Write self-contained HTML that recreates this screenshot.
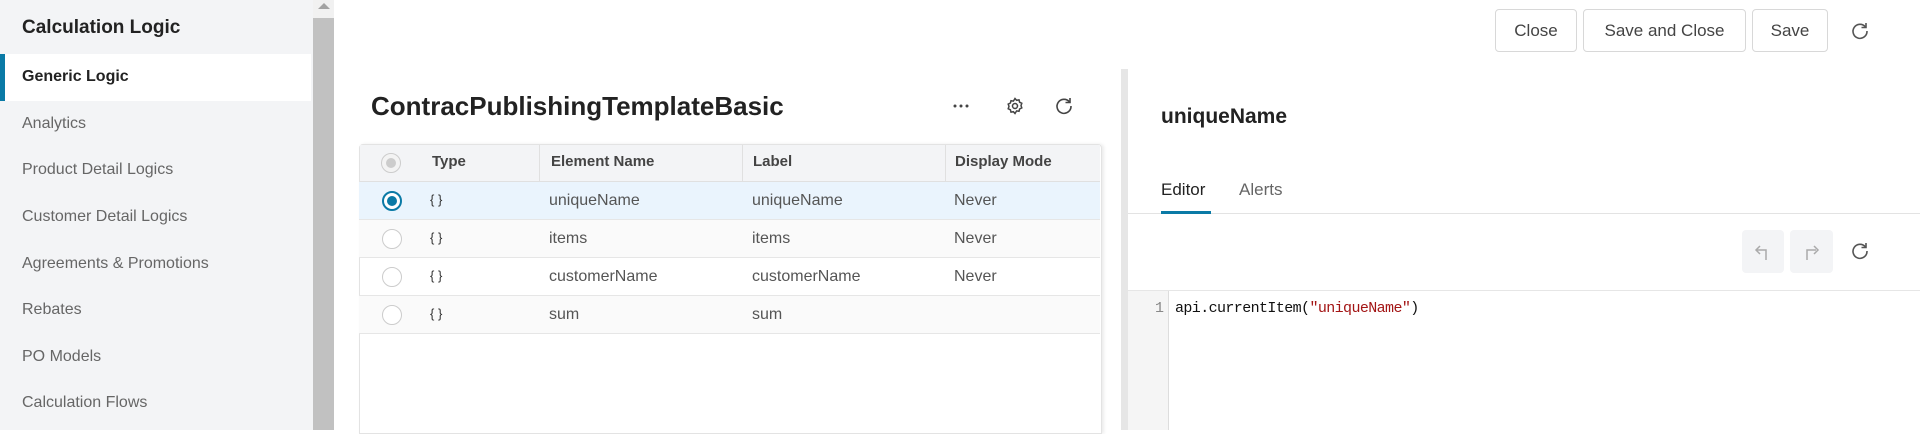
<!DOCTYPE html>
<html><head><style>
*{box-sizing:border-box;margin:0;padding:0}
body{width:1920px;height:430px;overflow:hidden;background:#fff;font-family:"Liberation Sans",sans-serif;position:relative;color:#222}
.a{position:absolute}
.side{left:0;top:0;width:313px;height:430px;background:#f3f4f6}
.side .t{left:22px;top:17px;font-size:19px;font-weight:bold;color:#222}
.side .it{left:22px;font-size:16px;color:#666;white-space:nowrap}
.sb{left:313px;top:0;width:21px;height:430px;background:#f1f1f1}
.btn{border:1px solid #d8d8d8;border-radius:4px;height:43px;top:9px;font-size:17px;color:#444;display:flex;align-items:center;justify-content:center;background:#fff}
.th{font-size:15px;font-weight:bold;color:#444;top:153px}
.row{left:359px;width:741px;height:38px;border-bottom:1px solid #e6e6e6}
.cell{font-size:16px;color:#555;white-space:nowrap}
.rad{width:20px;height:20px;border:1px solid #ccc;border-radius:50%;background:#fff}
</style></head><body>
<div class="a side">
 <div class="a t">Calculation Logic</div>
 <div class="a" style="left:0;top:54px;width:311px;height:47px;background:#fff"></div>
 <div class="a" style="left:0;top:54px;width:5px;height:47px;background:#0a7aa6"></div>
 <div class="a it" style="top:68px;color:#222;font-weight:bold">Generic Logic</div>
 <div class="a it" style="top:115px">Analytics</div>
 <div class="a it" style="top:161px">Product Detail Logics</div>
 <div class="a it" style="top:208px">Customer Detail Logics</div>
 <div class="a it" style="top:255px">Agreements &amp; Promotions</div>
 <div class="a it" style="top:301px">Rebates</div>
 <div class="a it" style="top:348px">PO Models</div>
 <div class="a it" style="top:394px">Calculation Flows</div>
</div>
<div class="a sb"><div class="a" style="left:5px;top:3px;width:0;height:0;border-left:6px solid transparent;border-right:6px solid transparent;border-bottom:6px solid #a3a3a3"></div><div class="a" style="left:0;top:18px;width:21px;height:412px;background:#c1c1c1"></div></div>

<div class="a btn" style="left:1495px;width:82px">Close</div>
<div class="a btn" style="left:1583px;width:163px">Save and Close</div>
<div class="a btn" style="left:1752px;width:76px">Save</div>
<svg class="a" style="left:1850px;top:21px" width="20" height="20" viewBox="0 0 20 20" fill="none" stroke="#555" stroke-width="1.6"><path d="M15.5 6A7 7 0 1 0 17 10"/><path d="M16 2v4.5h-4.5"/></svg>

<div class="a" style="left:371px;top:91px;font-size:26px;font-weight:bold;color:#222;white-space:nowrap">ContracPublishingTemplateBasic</div>
<svg class="a" style="left:952px;top:102px" width="18" height="8" viewBox="0 0 18 8" fill="#444"><circle cx="3" cy="4" r="1.5"/><circle cx="9" cy="4" r="1.5"/><circle cx="15" cy="4" r="1.5"/></svg>
<svg class="a" style="left:1005px;top:96px" width="20" height="20" viewBox="0 0 20 20" fill="none" stroke="#444" stroke-width="1.5"><circle cx="10" cy="10" r="2.5"/><path d="M10 2.5l1.6 1.8 2.4-.4.6 2.3 2.2 1.1-.8 2.3.8 2.3-2.2 1.1-.6 2.3-2.4-.4L10 17.5l-1.6-1.8-2.4.4-.6-2.3-2.2-1.1.8-2.3-.8-2.3 2.2-1.1.6-2.3 2.4.4z"/></svg>
<svg class="a" style="left:1054px;top:96px" width="20" height="20" viewBox="0 0 20 20" fill="none" stroke="#444" stroke-width="1.6"><path d="M15.5 6A7 7 0 1 0 17 10"/><path d="M16 2v4.5h-4.5"/></svg>

<div class="a" style="left:359px;top:144px;width:743px;height:290px;border:1px solid #e3e3e3;border-radius:4px 4px 0 0;box-shadow:2px 0 3px rgba(0,0,0,.08)"></div>
<div class="a" style="left:360px;top:145px;width:740px;height:37px;background:#f3f4f6;border-bottom:1px solid #e0e0e0"></div>
<div class="a" style="left:539px;top:145px;width:1px;height:37px;background:#e0e0e0"></div>
<div class="a" style="left:742px;top:145px;width:1px;height:37px;background:#e0e0e0"></div>
<div class="a" style="left:945px;top:145px;width:1px;height:37px;background:#e0e0e0"></div>
<div class="a rad" style="left:381px;top:153px;background:#f3f3f3"><div class="a" style="left:4px;top:4px;width:10px;height:10px;border-radius:50%;background:#ccc"></div></div>
<div class="a th" style="left:432px">Type</div>
<div class="a th" style="left:551px">Element Name</div>
<div class="a th" style="left:753px">Label</div>
<div class="a th" style="left:955px">Display Mode</div>

<div class="a row" style="top:182px;background:#eaf4fd"></div>
<div class="a row" style="top:220px;background:#fafafa"></div>
<div class="a row" style="top:258px"></div>
<div class="a row" style="top:296px;background:#fafafa"></div>
<div class="a rad" style="left:382px;top:191px;border:2px solid #0a7aa6"><div class="a" style="left:3px;top:3px;width:10px;height:10px;border-radius:50%;background:#0a7aa6"></div></div>
<div class="a rad" style="left:382px;top:229px"></div>
<div class="a rad" style="left:382px;top:267px"></div>
<div class="a rad" style="left:382px;top:305px"></div>
<div class="a cell" style="left:430px;top:192px;font-size:13px;color:#333">{ }</div>
<div class="a cell" style="left:430px;top:230px;font-size:13px;color:#333">{ }</div>
<div class="a cell" style="left:430px;top:268px;font-size:13px;color:#333">{ }</div>
<div class="a cell" style="left:430px;top:306px;font-size:13px;color:#333">{ }</div>
<div class="a cell" style="left:549px;top:192px">uniqueName</div><div class="a cell" style="left:752px;top:192px">uniqueName</div><div class="a cell" style="left:954px;top:192px">Never</div>
<div class="a cell" style="left:549px;top:230px">items</div><div class="a cell" style="left:752px;top:230px">items</div><div class="a cell" style="left:954px;top:230px">Never</div>
<div class="a cell" style="left:549px;top:268px">customerName</div><div class="a cell" style="left:752px;top:268px">customerName</div><div class="a cell" style="left:954px;top:268px">Never</div>
<div class="a cell" style="left:549px;top:306px">sum</div><div class="a cell" style="left:752px;top:306px">sum</div>

<div class="a" style="left:1121px;top:69px;width:7px;height:361px;background:#e6e6e6"></div>

<div class="a" style="left:1161px;top:105px;font-size:21px;font-weight:bold;color:#222">uniqueName</div>
<div class="a" style="left:1161px;top:180px;font-size:17px;color:#222">Editor</div>
<div class="a" style="left:1239px;top:180px;font-size:17px;color:#666">Alerts</div>
<div class="a" style="left:1128px;top:213px;width:792px;height:1px;background:#e3e3e3"></div>
<div class="a" style="left:1161px;top:211px;width:50px;height:3px;background:#0a7aa6"></div>
<div class="a" style="left:1742px;top:230px;width:42px;height:43px;background:#f3f4f6;border-radius:4px"></div>
<div class="a" style="left:1790px;top:230px;width:43px;height:43px;background:#f3f4f6;border-radius:4px"></div>
<svg class="a" style="left:1754px;top:242px" width="18" height="20" viewBox="0 0 18 20" fill="none" stroke="#aaa" stroke-width="1.5"><path d="M12 18V8H3"/><path d="M6 4L2 8l4 4"/></svg>
<svg class="a" style="left:1802px;top:242px" width="18" height="20" viewBox="0 0 18 20" fill="none" stroke="#aaa" stroke-width="1.5"><path d="M5 18V8h9"/><path d="M12 4l4 4-4 4"/></svg>
<svg class="a" style="left:1850px;top:241px" width="20" height="20" viewBox="0 0 20 20" fill="none" stroke="#555" stroke-width="1.6"><path d="M15.5 6A7 7 0 1 0 17 10"/><path d="M16 2v4.5h-4.5"/></svg>
<div class="a" style="left:1128px;top:290px;width:792px;height:1px;background:#e6e6e6"></div>
<div class="a" style="left:1128px;top:291px;width:41px;height:139px;background:#f5f5f5;border-right:1px solid #ddd"></div>
<div class="a" style="left:1155px;top:300px;font-family:'Liberation Mono',monospace;font-size:15px;color:#888">1</div>
<div class="a" style="left:1175px;top:300px;font-family:'Liberation Mono',monospace;font-size:15px;color:#111;letter-spacing:-0.6px;white-space:nowrap">api.currentItem(<span style="color:#a31515">"uniqueName"</span>)</div>
</body></html>
